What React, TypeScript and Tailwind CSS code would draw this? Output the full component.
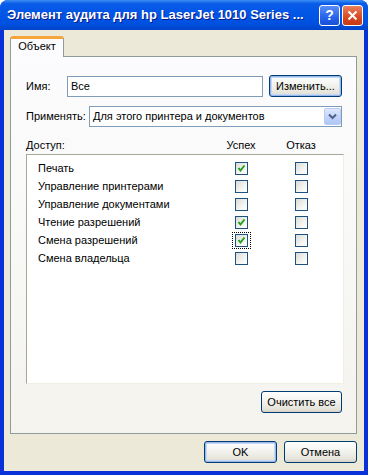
import React from 'react';

const font = { fontFamily: '"Liberation Sans", Arial, sans-serif' };

const rows = [
  { name: 'Печать', ok: true, fail: false },
  { name: 'Управление принтерами', ok: false, fail: false },
  { name: 'Управление документами', ok: false, fail: false },
  { name: 'Чтение разрешений', ok: true, fail: false },
  { name: 'Смена разрешений', ok: true, fail: false, focus: true },
  { name: 'Смена владельца', ok: false, fail: false },
];

const CheckBox = ({ checked }: { checked: boolean }) => (
  <span className="flex h-[13px] w-[13px] items-center justify-center border border-[#1c5180] bg-[linear-gradient(135deg,#dcdcd5_0%,#f4f4f0_60%,#ffffff_100%)]">
    {checked && (
      <svg width="11" height="11" viewBox="0 0 11 11">
        <polyline points="2.5,5 4.5,7.5 8.5,2.5" fill="none" stroke="#21a121" strokeWidth="2" />
      </svg>
    )}
  </span>
);

const XpButton = ({ children, w, focused }: { children: React.ReactNode; w: string; focused?: boolean }) => (
  <button
    className={
      w +
      ' h-[22px] rounded-[3px] border border-[#003c74] bg-[linear-gradient(180deg,#ffffff_0%,#f4f4f0_40%,#e6e4da_85%,#d6d0c5_100%)] text-[11px] text-black ' +
      (focused ? 'shadow-[inset_0_0_0_1px_#98b8ea,inset_0_0_0_2px_#c4d8f8]' : '')
    }
  >
    {children}
  </button>
);

export default function App() {
  return (
    <div style={font} className="h-[475px] w-[368px] bg-white">
      <div className="flex h-[475px] w-[368px] flex-col rounded-t-[8px] bg-[#0831d9]">
        {/* title bar */}
        <div className="flex h-[30px] shrink-0 items-center rounded-t-[8px] bg-[linear-gradient(180deg,#3d8ff5_0%,#0a5ce8_12%,#0055e6_50%,#0050e0_80%,#0043c8_100%)] pl-[7px] pr-[5px]">
          <span className="flex-1 text-[13px] font-bold text-white [text-shadow:1px_1px_#0a1883]">
            Элемент аудита для hp LaserJet 1010 Series ...
          </span>
          <div className="flex gap-[2px]">
            <span className="flex h-[21px] w-[21px] items-center justify-center rounded-[3px] border border-white bg-[linear-gradient(180deg,#5c8ef7_0%,#2563ea_60%,#1a50d8_100%)] text-[14px] font-bold text-white">
              ?
            </span>
            <span className="flex h-[21px] w-[21px] items-center justify-center rounded-[3px] border border-white bg-[linear-gradient(180deg,#e9805f_0%,#d8481f_60%,#c63a14_100%)]">
              <svg width="11" height="11" viewBox="0 0 11 11">
                <path d="M1.5 1.5 L9.5 9.5 M9.5 1.5 L1.5 9.5" stroke="white" strokeWidth="2" />
              </svg>
            </span>
          </div>
        </div>

        {/* body */}
        <div className="mx-[4px] mb-[4px] flex flex-1 flex-col bg-[#ece9d8] pl-[6px] pr-[7px] pt-[6px]">
          <div className="flex">
            <div className="-mb-px z-10 flex h-[21px] w-[54px] items-end justify-center rounded-t-[3px] border-x border-t-[3px] border-x-[#919b9c] border-t-[#f5a53a] bg-[#fcfcfe] pb-[3px] text-[11px] text-black">
              Объект
            </div>
          </div>
          <div className="flex h-[378px] flex-col border border-[#919b9c] bg-[linear-gradient(180deg,#fcfcfe_0%,#f8f8f6_50%,#f4f3ee_100%)] pl-[15px] pr-[14px] pt-[18px] text-[11px] text-black">
            <div className="flex h-[22px] items-center">
              <span className="w-[41px]">Имя:</span>
              <div className="flex h-[21px] w-[196px] items-center border border-[#7f9db9] bg-white pl-[3px]">Все</div>
              <div className="ml-auto">
                <XpButton w="w-[73px]" focused>Изменить...</XpButton>
              </div>
            </div>

            <div className="mt-[9px] flex h-[21px] items-center">
              <span className="w-[63px]">Применять:</span>
              <div className="flex h-[21px] flex-1 items-center border border-[#7f9db9] bg-white pl-[3px]">
                <span className="flex-1">Для этого принтера и документов</span>
                <span className="flex h-[17px] w-[17px] items-center justify-center rounded-[2px] border border-[#b9cdf5] bg-[linear-gradient(180deg,#dfe8fd_0%,#c4d4fb_50%,#b1c6f6_100%)]">
                  <svg width="9" height="7" viewBox="0 0 9 7">
                    <path d="M1 1.5 L4.5 5 L8 1.5" fill="none" stroke="#4d6185" strokeWidth="2" />
                  </svg>
                </span>
              </div>
            </div>

            <div className="mt-[10px] grid h-[16px] w-[318px] grid-cols-[1fr_60px_60px] items-center pr-[13px]">
              <span>Доступ:</span>
              <span className="text-center">Успех</span>
              <span className="text-center">Отказ</span>
            </div>

            <div className="mt-px flex h-[230px] w-[318px] flex-col border border-t-[#a7a697] border-l-[#a7a697] border-r-[#f1efe2] border-b-[#f1efe2] bg-white pl-[11px] pr-[12px] pt-[4px]">
              {rows.map((r) => (
                <div key={r.name} className="grid h-[18px] grid-cols-[1fr_60px_60px] items-center">
                  <span>{r.name}</span>
                  <span className="flex justify-center">
                    {r.focus ? (
                      <span className="border border-dotted border-black px-[2px] py-px">
                        <CheckBox checked={r.ok} />
                      </span>
                    ) : (
                      <CheckBox checked={r.ok} />
                    )}
                  </span>
                  <span className="flex justify-center">
                    <CheckBox checked={r.fail} />
                  </span>
                </div>
              ))}
            </div>

            <div className="mt-[7px] flex w-[316px] justify-end">
              <XpButton w="w-[81px]">Очистить все</XpButton>
            </div>
          </div>

          <div className="mt-[7px] flex justify-end gap-[7px]">
            <XpButton w="w-[73px]" focused>OK</XpButton>
            <XpButton w="w-[73px]">Отмена</XpButton>
          </div>
        </div>
      </div>
    </div>
  );
}
